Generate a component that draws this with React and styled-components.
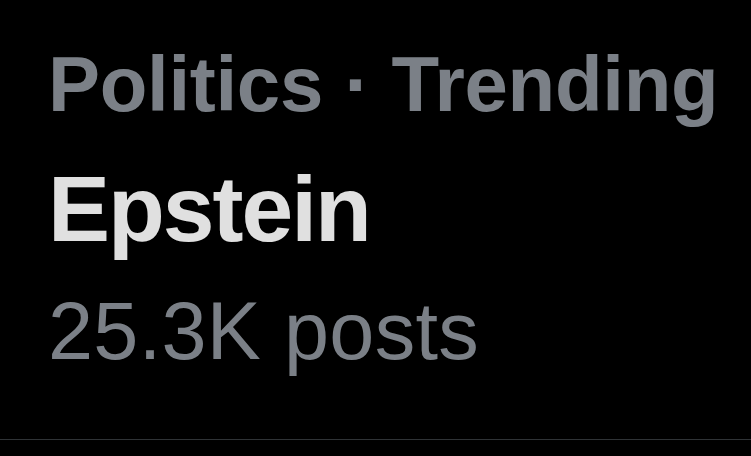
import React from 'react';
import styled, { createGlobalStyle } from 'styled-components';

const GlobalStyle = createGlobalStyle`
  html, body {
    margin: 0;
    padding: 0;
    background: #000;
  }
`;

const TrendCard = styled.div`
  width: 751px;
  height: 456px;
  background: #000;
  font-family: "Liberation Sans", Arial, sans-serif;
  box-sizing: border-box;
`;

const TrendBody = styled.div`
  display: flex;
  flex-direction: column;
  padding: 44px 0 0 48px;
  height: 440px;
  box-sizing: border-box;
  border-bottom: 1px solid #2f3336;
`;

const Context = styled.div`
  color: #7b8087;
  font-size: 78px;
  line-height: 80px;
  font-weight: 700;
  letter-spacing: -0.3px;
  white-space: nowrap;
`;

const Topic = styled.div`
  margin-top: 35px;
  color: #e0e0e0;
  font-size: 93px;
  line-height: 100px;
  font-weight: 700;
  letter-spacing: -2px;
`;

const Count = styled.div`
  margin-top: 27px;
  color: #7b8087;
  font-size: 81px;
  line-height: 90px;
  font-weight: 400;
  letter-spacing: 0.3px;
`;

export default function App() {
  return (
    <TrendCard>
      <GlobalStyle />
      <TrendBody>
        <Context>Politics · Trending</Context>
        <Topic>Epstein</Topic>
        <Count>25.3K posts</Count>
      </TrendBody>
    </TrendCard>
  );
}
